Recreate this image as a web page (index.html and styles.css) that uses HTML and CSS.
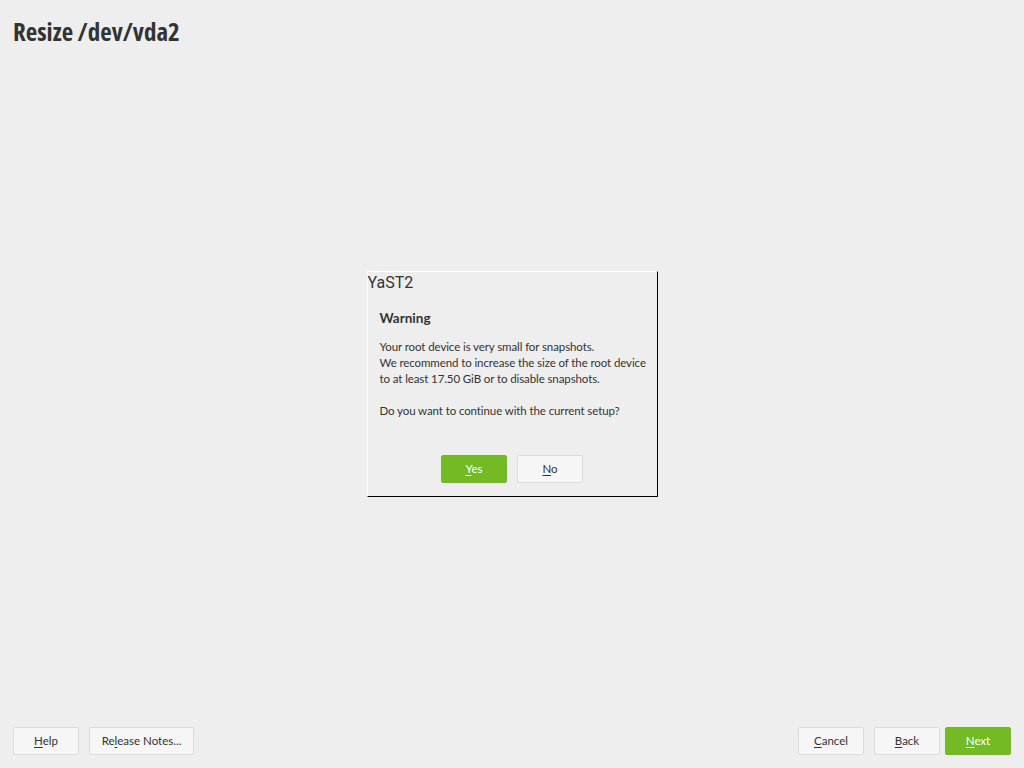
FILE: index.html
```html
<!DOCTYPE html>
<html>
<head>
<meta charset="utf-8">
<link rel="stylesheet" href="styles.css">
</head>
<body>
<div class="screen">
  <header class="header"><h1 class="title">Resize /dev/vda2</h1></header>
  <main class="main">
    <div class="dialog">
      <div class="dialog-title">YaST2</div>
      <div class="dialog-body">
        <div class="heading">Warning</div>
        <p class="msg">Your root device is very small for snapshots.<br>We recommend to increase the size of the root device<br>to at least 17.50 GiB or to disable snapshots.</p>
        <p class="msg">Do you want to continue with the current setup?</p>
      </div>
      <div class="dialog-buttons">
        <button class="btn btn-primary"><u>Y</u>es</button>
        <button class="btn"><u>N</u>o</button>
      </div>
    </div>
  </main>
  <footer class="footer">
    <div class="group">
      <button class="btn"><u>H</u>elp</button>
      <button class="btn btn-wide">Re<u>l</u>ease Notes...</button>
    </div>
    <div class="group">
      <button class="btn"><u>C</u>ancel</button>
      <button class="btn"><u>B</u>ack</button>
      <button class="btn btn-primary btn-next"><u>N</u>ext</button>
    </div>
  </footer>
</div>
</body>
</html>
```
FILE: styles.css
```css
* { box-sizing: border-box; }
html, body { margin: 0; padding: 0; }
body {
  background: #eeeeee;
  color: #333333;
  font-family: Lato, "Liberation Sans", sans-serif;
  width: 1024px;
  height: 768px;
  overflow: hidden;
}
.screen {
  display: flex;
  flex-direction: column;
  height: 768px;
}
.header { padding: 14px 13px 0; }
.title {
  margin: 0;
  font-family: "Open Sans", sans-serif;
  font-stretch: 75%;
  font-weight: 700;
  font-size: 25px;
  line-height: 34px;
  color: #333333;
}
.main {
  flex: 1;
  display: flex;
  align-items: flex-start;
  justify-content: center;
  padding-top: 223px;
}
.dialog {
  width: 291px;
  height: 226px;
  border-top: 1px solid #ffffff;
  border-left: 1px solid #ffffff;
  border-right: 1px solid #000000;
  border-bottom: 1px solid #000000;
  display: flex;
  flex-direction: column;
}
.dialog-title {
  font-family: Roboto, sans-serif;
  font-size: 16px;
  line-height: 20px;
  padding: 1px 0 0 0;
  color: #333333;
}
.dialog-body { padding: 16px 12px 0; white-space: nowrap; }
.heading {
  font-family: Lato, sans-serif;
  font-weight: 700;
  font-size: 13.5px;
  line-height: 18px;
}
.msg {
  margin: 12px 0 0;
  font-family: Lato, sans-serif;
  font-size: 11.5px;
  letter-spacing: -0.1px;
  line-height: 16px;
}
.msg + .msg { margin-top: 16px; }
.dialog-buttons {
  margin-top: auto;
  margin-bottom: 13px;
  display: flex;
  justify-content: center;
  gap: 10px;
}
.btn {
  width: 66px;
  height: 28px;
  background: #f6f6f6;
  border: 1px solid #dcdcdc;
  border-radius: 2px;
  font-family: Lato, sans-serif;
  font-size: 11.5px;
  color: #333333;
  padding: 0 0 2px 0;
  white-space: nowrap;
}
.btn u { text-underline-offset: 2px; }
.btn-primary {
  background: #73ba25;
  border-color: #73ba25;
  color: #ffffff;
}
.btn-wide { width: 105px; }
.footer {
  display: flex;
  justify-content: space-between;
  padding: 0 13px 13px 13px;
}
.group { display: flex; gap: 10px; }
.group .btn-next { margin-left: -5px; }
```
